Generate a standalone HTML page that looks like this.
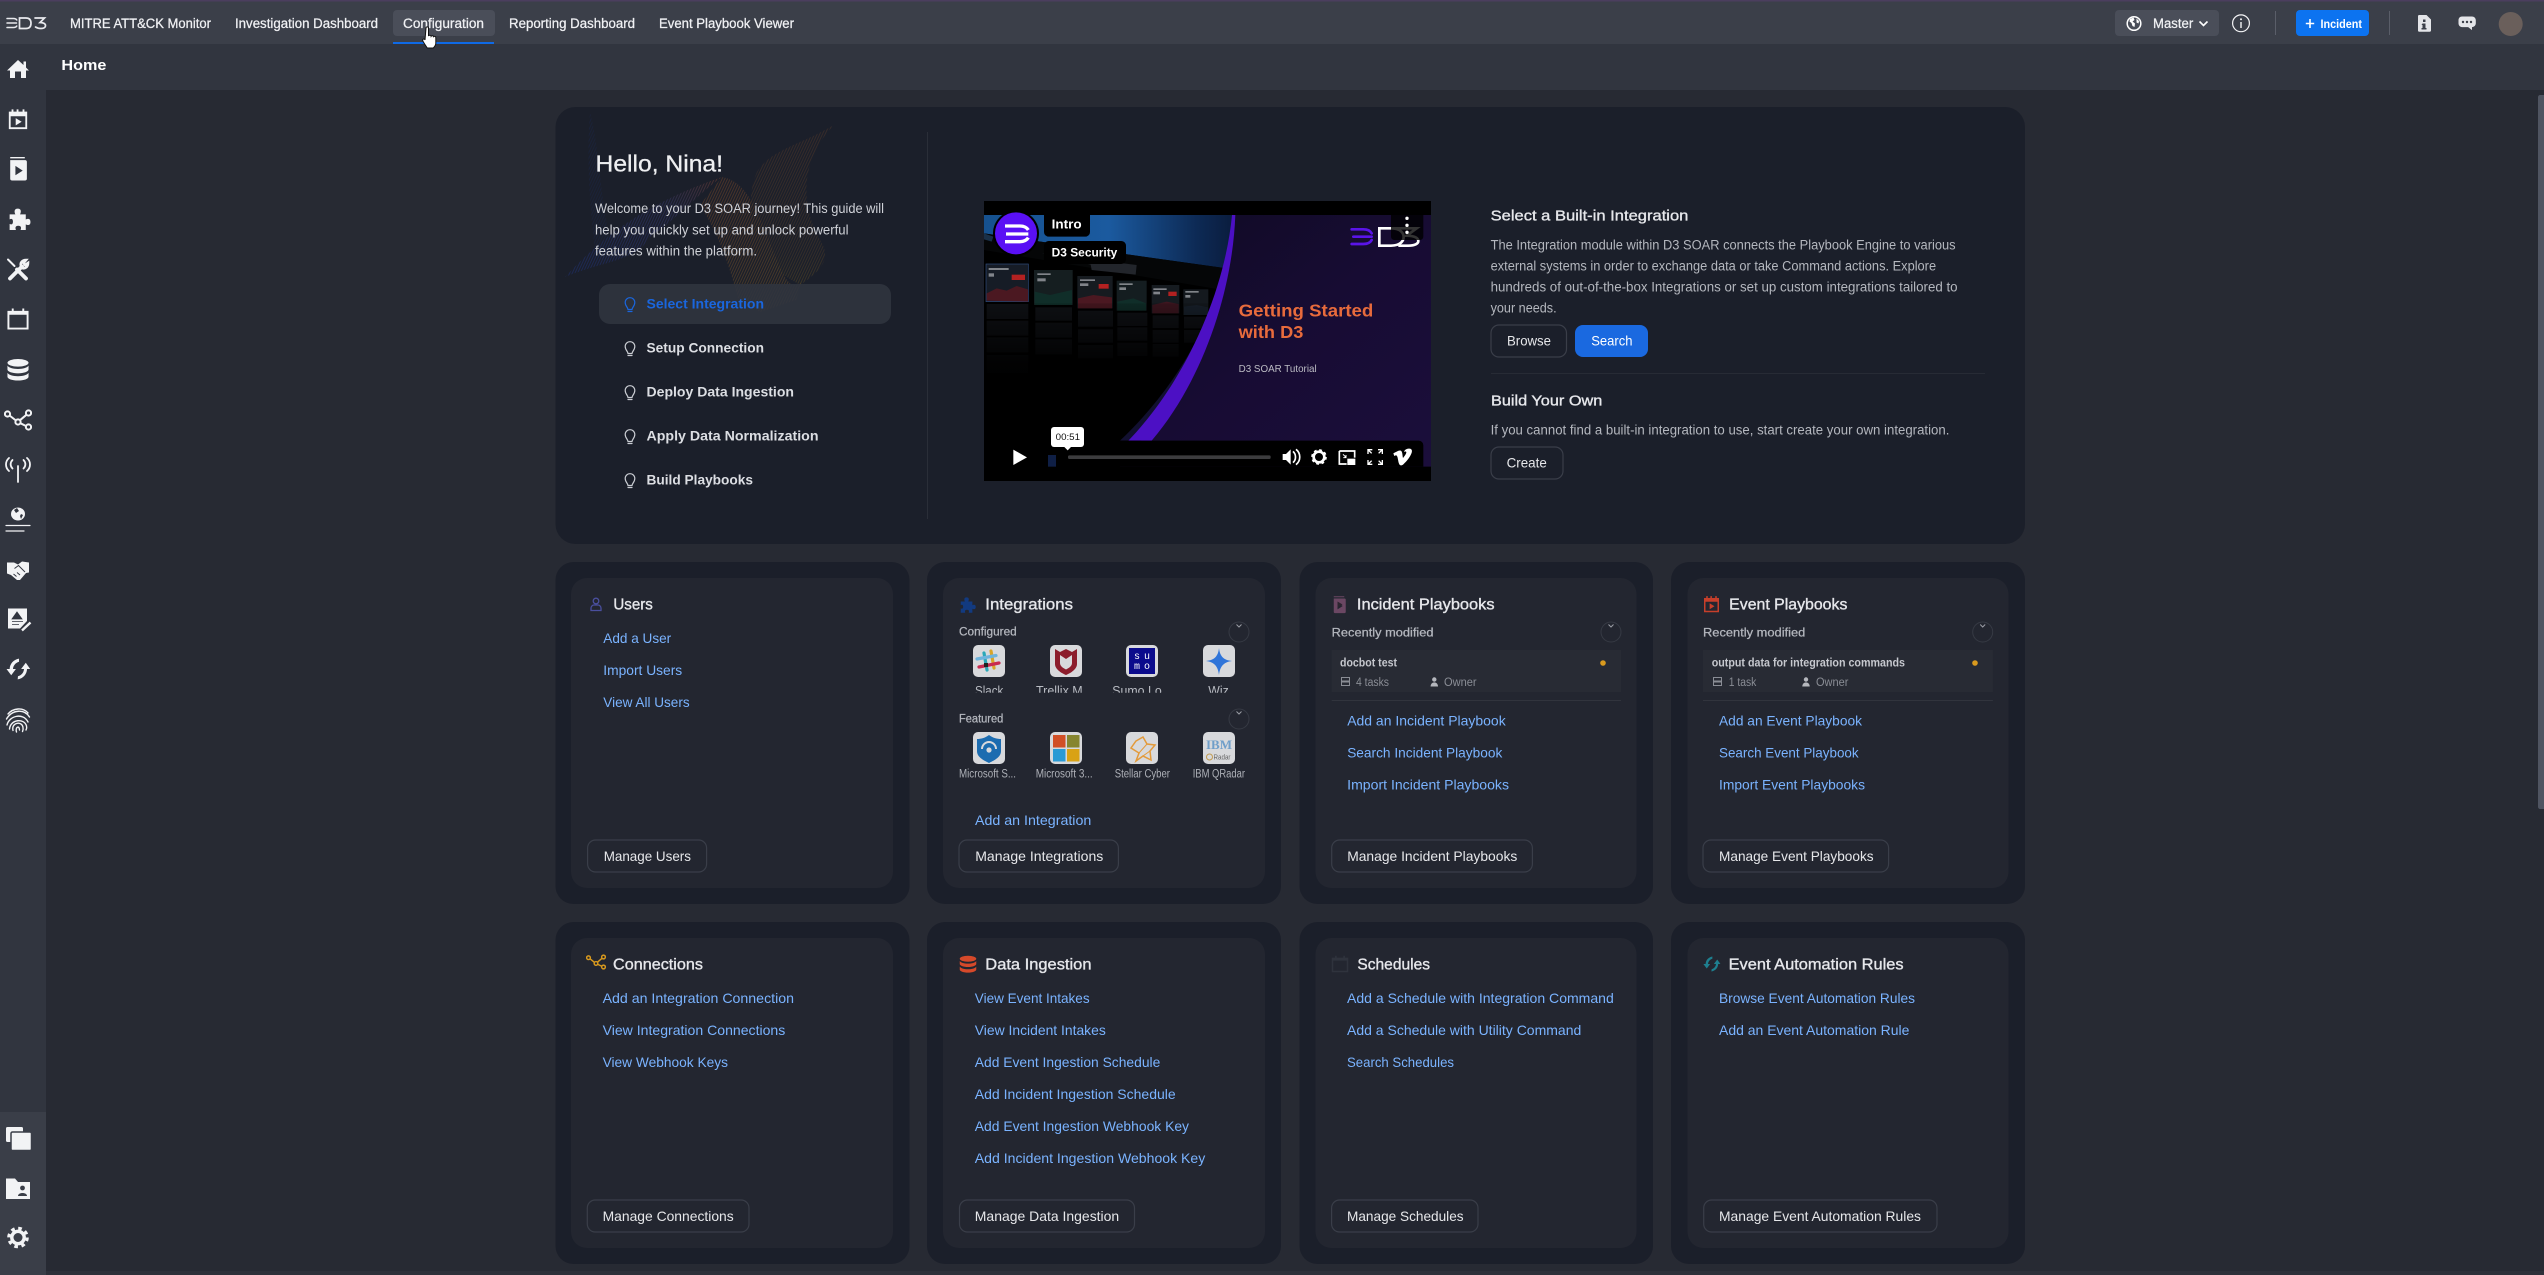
<!DOCTYPE html>
<html lang="en">
<head>
<meta charset="utf-8">
<title>D3 SOAR Home</title>
<style>
html,body{margin:0;padding:0;background:#272a33;width:2544px;height:1275px;overflow:hidden}
svg{display:block}
text{font-family:"Liberation Sans",Arial,sans-serif;white-space:pre}
.n{font-size:13.5px;fill:#f0f1f4;stroke:#f0f1f4;stroke-width:.25}
.h{font-size:15px;font-weight:700;fill:#fff}
.p{font-size:13.5px;fill:#b4b7be}
.w{font-size:13.5px;fill:#cfd1d7}
.s{font-size:13.5px;font-weight:700;fill:#dcdee3}
.t{font-size:15.5px;fill:#e6e7eb;stroke:#e6e7eb;stroke-width:.35}
.l{font-size:14px;fill:#7ab3ff;transform:translateY(-.4px)}
.b{font-size:14px;fill:#e6e7ea}
.g{font-size:11.5px;fill:#b4b7be;stroke:#b4b7be;stroke-width:.25}
.a{font-size:12.5px;fill:#b9bcc3}
.f{font-size:11.5px;fill:#aeb1b8}
.m{font-size:11.5px;fill:#8a8d95}
.r{font-size:11.5px;font-weight:700;fill:#c6c8ce}
.btn{fill:none;stroke:#3a3e49;stroke-width:1.2}
.o{fill:#1b1f2a}
.i{fill:#232630}
.c{fill:none;stroke:#363a44;stroke-width:1}
.v{fill:none;stroke:#9a9da5;stroke-width:1}
</style>
</head>
<body>
<svg xmlns="http://www.w3.org/2000/svg" width="2544" height="1275" viewBox="0 0 2544 1275">
<defs>
<symbol id="puzzle" viewBox="0 0 24 24"><path fill="currentColor" d="M3 8h5.500C7.500 6 7 2.500 10.800 2.500 14.600 2.500 14 6 13 8h5.500v5c1.800-1 4.500-1.200 4.500 2.300 0 3.500-2.700 3.300-4.500 2.300V23h-5c.9-2 .6-4-2.200-4-2.800 0-3.100 2-2.200 4H3v-5.800c1.800 1 3.200.4 3.200-2.200 0-2.600-1.400-3.200-3.200-2.200z"/></symbol>
<symbol id="book" viewBox="0 0 24 24"><path fill="currentColor" fill-rule="evenodd" d="M5 1h14v1.300H5zM5 4h14.500c.8 0 1.500.7 1.500 1.500V22c0 .8-.7 1.500-1.500 1.500H6.500C5.700 23.500 5 22.800 5 22zM10 9.500v9l7-4.500z"/></symbol>
<symbol id="calplay" viewBox="0 0 24 24"><path fill="currentColor" fill-rule="evenodd" d="M2 4h3V1.500h2V4h3.500V1.500h2V4H17V1.500h2V4h3v19H2zM4 9v12h16V9zM9.500 11v8l6.500-4z"/></symbol>
<symbol id="cal" viewBox="0 0 24 24"><path fill="currentColor" fill-rule="evenodd" d="M1 3.500h4.500V1h2v2.500h9V1h2v2.500H23V23H1zM3 7.500V21h18V7.500z"/></symbol>
<symbol id="db" viewBox="0 0 24 24"><ellipse cx="12" cy="5" rx="11" ry="4" fill="currentColor"/><path fill="currentColor" d="M1 8v4c0 2.200 5 4 11 4s11-1.800 11-4V8c-1.500 2.300-6 3.500-11 3.500S2.500 10.300 1 8z"/><path fill="currentColor" d="M1 15.500v4c0 2.200 5 4 11 4s11-1.800 11-4v-4c-1.500 2.300-6 3.500-11 3.500S2.500 17.800 1 15.500z"/></symbol>
<symbol id="net" viewBox="0 0 28 22"><g fill="none" stroke="currentColor" stroke-width="2"><circle cx="3.500" cy="5" r="2.600"/><circle cx="14" cy="13" r="2.600"/><circle cx="24.500" cy="4" r="2.600"/><circle cx="24.500" cy="18" r="2.600"/><path d="M5.700 6.600 11.800 11.400M16 11.200 22.400 5.800M16.300 14.200 22 17"/></g></symbol>
<symbol id="sync" viewBox="0 0 24 24"><path fill="currentColor" d="M12.500 2C7 3 3.700 7 3.500 12H.5l4.500 6 4.500-6H6.700c.2-3 2-5.800 5.800-7zM19 6l-4.500 6h2.800c-.2 3-2 5.800-5.800 7l-.3 3c5.500-1 8.800-5 9-10h3z"/></symbol>
<linearGradient id="gb" x1="0" y1="1" x2="1" y2="0"><stop offset="0" stop-color="#1f3fb0"/><stop offset=".7" stop-color="#4c4a9c"/><stop offset="1" stop-color="#c25a30"/></linearGradient>
<linearGradient id="go" x1="0" y1="0" x2="0" y2="1"><stop offset="0" stop-color="#b0612a"/><stop offset=".8" stop-color="#a0702a"/><stop offset="1" stop-color="#c89a20"/></linearGradient>
<pattern id="lines" width="2.400" height="2.400" patternUnits="userSpaceOnUse" patternTransform="rotate(25)"><rect width="1" height="2.400" fill="#fff"/></pattern>
<mask id="lm"><rect x="540" y="100" width="400" height="300" fill="url(#lines)"/></mask>
<linearGradient id="pb" x1="0" y1="0" x2="1" y2="1"><stop offset="0" stop-color="#0f0a22"/><stop offset=".5" stop-color="#170c33"/><stop offset="1" stop-color="#1b0e3b"/></linearGradient>
<linearGradient id="bl" x1="0" y1="0" x2="1" y2="0"><stop offset="0" stop-color="#16518f"/><stop offset=".5" stop-color="#1b5a9f"/><stop offset=".85" stop-color="#0d2a55"/><stop offset="1" stop-color="#0a1c3d"/></linearGradient>
<linearGradient id="fade" x1="0" y1="0" x2="0" y2="1"><stop offset="0" stop-color="#000" stop-opacity=".15"/><stop offset=".65" stop-color="#000" stop-opacity=".9"/><stop offset="1" stop-color="#000"/></linearGradient>
<clipPath id="lab"><rect x="950" y="680" width="310" height="12.800"/></clipPath>
<clipPath id="vid"><rect x="72" y="33" width="1341" height="840"/></clipPath>
</defs>

<!-- page backgrounds -->
<rect width="2544" height="1275" fill="#272a33"/>
<rect x="0" y="44" width="2544" height="46" fill="#31353f"/>
<rect x="0" y="44" width="46" height="1231" fill="#31353f"/>
<rect x="0" y="1112" width="46" height="163" fill="#3a3e48"/>
<rect x="46" y="1271" width="2498" height="4" fill="#2d3039"/>
<rect x="0" y="0" width="2544" height="44" fill="#3b3f49"/>
<rect x="0" y="0" width="2544" height="1.500" fill="#4b3e5e"/>

<!-- logo -->
<g fill="none" stroke="#e9eaee" stroke-linecap="round">
<path stroke-width="1.500" d="M7 18.500h6.500c2 0 3 1 3.300 1.500M7 23h9.500M7 27.500h6.500c2 0 3-1 3.300-1.500"/>
<path stroke-width="1.700" d="M19.500 18h6.500c3.500 0 5 2 5 5.300S29.500 28.500 26 28.500h-6.500zM35 18h9.500l-4.500 4.500c3.500 0 5.500 1.300 5.500 3 0 2-2 3-4.500 3-2 0-4-.6-5.500-1.500"/>
</g>

<!-- nav -->
<rect x="393" y="10" width="102" height="26" rx="4" fill="#4a4e59"/>
<rect x="393" y="42" width="101" height="2" fill="#0f6ae6"/>
<text class="n" x="70" y="28" textLength="141" lengthAdjust="spacingAndGlyphs">MITRE ATT&amp;CK Monitor</text>
<text class="n" x="235" y="28" textLength="143" lengthAdjust="spacingAndGlyphs">Investigation Dashboard</text>
<text class="n" x="403" y="28" textLength="81" lengthAdjust="spacingAndGlyphs">Configuration</text>
<text class="n" x="509" y="28" textLength="126" lengthAdjust="spacingAndGlyphs">Reporting Dashboard</text>
<text class="n" x="659" y="28" textLength="135" lengthAdjust="spacingAndGlyphs">Event Playbook Viewer</text>
<!-- hand cursor -->
<path transform="translate(0 -4)" fill="#fff" stroke="#111" stroke-width="1" d="M426 32c0-1.500 2.500-1.500 2.500 0v8c.5-1 2.400-1 2.600.3.500-.9 2.300-.8 2.500.4.600-.6 2.200-.4 2.200 1v5.500c0 1.800-1.600 3.800-2.500 4.800h-6c-1-1.500-3.500-5-4.500-7.200-.6-1.400 1-2.400 2-1.300l.2.500z"/>

<!-- top right -->
<rect x="2115" y="10" width="104" height="26" rx="4" fill="#4a4e59"/>
<circle cx="2134" cy="23.500" r="6.800" fill="none" stroke="#fff" stroke-width="1.500"/>
<path fill="#fff" d="M2130 19l3.500-1.500 1 2.500-2 1.500 2.500 2-.5 3.500-2-1-1-3-2-1.500zM2136.500 18.500l2.500 2.500-.5 2.500-2-1z"/>
<text class="n" x="2153" y="28" textLength="40.200" lengthAdjust="spacingAndGlyphs">Master</text>
<path d="M2199.500 21.500 2203.500 25.500 2207.500 21.500" fill="none" stroke="#fff" stroke-width="1.600"/>
<circle cx="2241" cy="23.300" r="8.400" fill="none" stroke="#f4f4f6" stroke-width="1.200"/>
<path d="M2241 22v6" stroke="#f4f4f6" stroke-width="1.400"/><circle cx="2241" cy="19.300" r="1" fill="#f4f4f6"/>
<rect x="2275" y="11" width="1" height="24" fill="#5a5e69"/>
<rect x="2296" y="10" width="73" height="26" rx="4" fill="#0c73f0"/>
<path d="M2310 19v9M2305.800 23.500h8.400" stroke="#fff" stroke-width="1.600"/>
<text x="2320.500" y="28" font-size="12" font-weight="700" fill="#fff" textLength="41.500" lengthAdjust="spacingAndGlyphs">Incident</text>
<rect x="2389" y="11" width="1" height="24" fill="#5a5e69"/>
<path fill="#e4e5e9" d="M2419 15h7.500l4.500 4.500V30.500c0 .7-.6 1.200-1.200 1.200h-10.600c-.7 0-1.200-.6-1.200-1.200V16.200c0-.7.500-1.200 1-1.200z"/>
<path fill="#3b3f49" d="M2423 19.500h2.500v2.500H2423zM2422.500 23.500h3v4.500h1v1.500h-5V28h1v-3h-1z"/>
<path fill="#e4e5e9" d="M2462 16.500h10c2 0 3.800 1.500 3.800 3.800v3c0 2.200-1.700 3.800-3.800 3.800v3l-3.800-3h-6.200c-2 0-3.500-1.600-3.500-3.800v-3c0-2.300 1.500-3.800 3.500-3.800z"/>
<g fill="#3b3f49"><circle cx="2463" cy="22" r="1.200"/><circle cx="2467" cy="22" r="1.200"/><circle cx="2471" cy="22" r="1.200"/></g>
<ellipse cx="2510.700" cy="24" rx="12" ry="12" fill="#6a5f5b"/>

<!-- Home title -->
<text class="h" x="61.400" y="70" textLength="45" lengthAdjust="spacingAndGlyphs">Home</text>

<!-- scrollbar -->
<path d="M2544 95h-4c-1 0-2 1-2 2v710c0 1 1 2 2 2h4z" fill="#4f5461"/>

<!-- sidebar icons -->
<g color="#f2f3f5" fill="#f2f3f5">
<path d="M18 60 23.500 65V61.500H26V67.500L29 70.500H26V78H21V71.500H15V78H10V70.500H7z"/>
<use href="#calplay" x="7" y="108" width="22" height="22"/>
<use href="#book" x="5" y="156" width="25" height="25"/>
<use href="#puzzle" x="6.500" y="205.500" width="25" height="26"/>
<g fill="none" stroke="#f2f3f5" stroke-linecap="round">
<path stroke-width="2" d="M8 259.500 14.500 266"/>
<path stroke-width="3.800" d="M17 269.500 26 278.500"/>
<path stroke-width="3.800" d="M10 278.500 22 266.500"/>
<path stroke-width="2.600" d="M21 266c-1-3 1-6 5-6l-2.500 3 1.500 2 3-2c0 4-3 6-6 5"/>
</g>
<use href="#cal" x="6.500" y="307.500" width="23" height="23"/>
<use href="#db" x="6.500" y="357" width="23" height="25"/>
<use href="#net" x="4" y="409" width="28" height="22"/>
<g fill="none" stroke="#f2f3f5" stroke-width="1.800" stroke-linecap="round">
<path d="M18 466V482"/>
<path d="M12.500 460c-2.500 2.500-2.500 6 0 8.500M9 458c-4 3.500-4 9.500 0 13M23.500 460c2.500 2.500 2.500 6 0 8.500M27 458c4 3.500 4 9.500 0 13"/>
<path d="M6 525.500H30M6 531H24" stroke-width="1.200"/>
</g>
<ellipse cx="18" cy="514" rx="7" ry="6.500"/>
<path d="M14 510l3-2 2 3-3 2zM21 514l2 1-2 4-1-3z" fill="#31353f"/>
<path d="M7 562.500 14 562.500 18 564.500 22 561.500 29 562.500V572.500L26 573 20 580H17L11 575 7 573.500z"/>
<path d="M14.500 568.500 18.500 565.500 25 572M13.500 574l3 2.500M17 572.500l3 2.500" fill="none" stroke="#31353f" stroke-width="1"/>
<path d="M8 608.500H27V621L20 628.500H8z"/>
<path d="M17 612 22 619H12zM12 621.500H23M12 624.500H19" fill="#31353f" stroke="#31353f" stroke-width=".8"/>
<path d="M22 630.500 30.500 622.500" stroke="#f2f3f5" stroke-width="2.400" fill="none"/>
<use href="#sync" x="6" y="655" width="25" height="28"/>
<g fill="none" stroke="#f2f3f5" stroke-width="1.400" stroke-linecap="round">
<path d="M8 714c5-6 15-7 20-1M6.500 719c6-10 18-10 23-2M7 725c2-9 16-13 21-3M9.500 729c1-10 15-11 17-3 .6 2 0 3-.5 4M13 730.500c-2-8 9-10 10-3 .4 2 0 3-.5 4M16.500 732c-1.600-5 3-7 3-2"/>
</g>
<rect x="6" y="1127" width="17" height="15" rx="1.500"/>
<rect x="11" y="1132" width="20.500" height="18.500" rx="1.500" stroke="#3a3e48" stroke-width="1.500"/>
<path d="M6 1178.500H15L18 1182H30V1199H6z"/>
<circle cx="22.500" cy="1188" r="2.400" fill="#3a3e48"/><path d="M18 1196c0-4 9-4 9 0z" fill="#3a3e48"/>
<g fill="none" stroke="#f2f3f5">
<circle cx="18" cy="1237.500" r="9" stroke-width="3.600" stroke-dasharray="3.530 3.530"/>
<circle cx="18" cy="1237.500" r="6.200" stroke-width="3.400"/>
</g>
</g>

<!-- hero -->
<rect class="o" x="555.500" y="107" width="1469.500" height="437" rx="20"/>
<g mask="url(#lm)" opacity=".3">
<path fill="url(#gb)" d="M565 277C600 240 640 205 722 177 700 192 670 225 648 238 640 260 600 262 565 277z"/>
<path fill="#1d3a90" opacity=".45" d="M590 112C600 150 600 200 612 250L596 262C590 210 586 160 590 112z"/>
<path fill="url(#go)" d="M722 177C752 182 762 226 778 262 786 282 792 290 802 282L796 300 760 312 738 298C730 270 722 240 700 205z"/>
<path fill="url(#go)" opacity=".6" d="M834 125C800 145 770 150 757 172 745 200 750 235 772 268L800 285C822 270 832 258 820 240 800 205 800 160 834 125z"/>
</g>
<rect x="927" y="132" width="1" height="387" fill="#2a2e38"/>

<text x="595.500" y="171.500" font-size="23" fill="#eeeff1" stroke="#eeeff1" stroke-width=".3" textLength="127.500" lengthAdjust="spacingAndGlyphs">Hello, Nina!</text>
<text class="w" x="595" y="213" textLength="289" lengthAdjust="spacingAndGlyphs">Welcome to your D3 SOAR journey! This guide will</text>
<text class="w" x="595" y="234.500" textLength="253.500" lengthAdjust="spacingAndGlyphs">help you quickly set up and unlock powerful</text>
<text class="w" x="595" y="255.500" textLength="162" lengthAdjust="spacingAndGlyphs">features within the platform.</text>

<rect x="599" y="284" width="292" height="40" rx="11" fill="#30343e" fill-opacity=".9"/>
<text class="s" style="fill:#1a66dd" x="646.500" y="308.700" textLength="117.500" lengthAdjust="spacingAndGlyphs">Select Integration</text>
<text class="s" x="646.500" y="352.700" textLength="117.500" lengthAdjust="spacingAndGlyphs">Setup Connection</text>
<text class="s" x="646.500" y="396.700" textLength="147.500" lengthAdjust="spacingAndGlyphs">Deploy Data Ingestion</text>
<text class="s" x="646.500" y="440.700" textLength="172" lengthAdjust="spacingAndGlyphs">Apply Data Normalization</text>
<text class="s" x="646.500" y="484.700" textLength="106.500" lengthAdjust="spacingAndGlyphs">Build Playbooks</text>
<g fill="none" stroke-width="1.200" stroke-linecap="round">
<g stroke="#1a66dd"><path d="M628 309.500c0-2-2.800-3.500-2.800-7a4.800 4.800 0 0 1 9.600 0c0 3.500-2.800 5-2.800 7zM628 311.500h4"/></g>
<g stroke="#c9ccd2">
<path d="M628 353.500c0-2-2.800-3.500-2.800-7a4.800 4.800 0 0 1 9.600 0c0 3.500-2.800 5-2.800 7zM628 355.500h4"/>
<path d="M628 397.500c0-2-2.800-3.500-2.800-7a4.800 4.800 0 0 1 9.600 0c0 3.500-2.800 5-2.800 7zM628 399.500h4"/>
<path d="M628 441.500c0-2-2.800-3.500-2.800-7a4.800 4.800 0 0 1 9.600 0c0 3.500-2.800 5-2.800 7zM628 443.500h4"/>
<path d="M628 485.500c0-2-2.800-3.500-2.800-7a4.800 4.800 0 0 1 9.600 0c0 3.500-2.800 5-2.800 7zM628 487.500h4"/>
</g></g>

<!-- video -->
<g transform="translate(960 190) scale(.33333)">
<g clip-path="url(#vid)">
<rect x="72" y="33" width="1341" height="840" fill="#000"/>
<path d="M72 75H822L800 235 480 190 72 130z" fill="url(#bl)"/>
<path d="M72 130 480 190 800 235 790 300 72 180z" fill="#050607"/>
<g opacity=".8">
<g stroke-width="2">
<rect x="78" y="222" width="127" height="113" fill="#1c2430" stroke="#3a5f9f"/>
<rect x="222" y="240" width="116" height="105" fill="#1b2629"/>
<rect x="352" y="258" width="106" height="97" fill="#1c2229"/>
<rect x="470" y="272" width="90" height="90" fill="#1a2528"/>
<rect x="575" y="285" width="83" height="85" fill="#1c2229"/>
<rect x="670" y="298" width="75" height="77" fill="#1a2026"/>
</g>
<path d="M80 332V310L110 295 140 302 170 288 204 298V335z" fill="#5e1e2a"/>
<path d="M224 345V305L270 315 336 300V345z" fill="#143a34"/>
<path d="M354 355V325L400 315 456 322V355z" fill="#5e1e2a"/>
<path d="M472 362V335L520 325 558 340V362z" fill="#143a34"/>
<path d="M577 370V345L620 335 656 342V370z" fill="#4e1c28"/>
<path d="M672 375V350L710 345 744 352V375z" fill="#1f2a38"/>
<g fill="#e02a2a"><rect x="155" y="254" width="40" height="16"/><rect x="416" y="282" width="30" height="14"/><rect x="625" y="305" width="25" height="13"/></g>
<g fill="#cfd3d9" opacity=".75"><rect x="86" y="234" width="60" height="6"/><rect x="86" y="250" width="16" height="10"/><rect x="232" y="250" width="40" height="5"/><rect x="232" y="265" width="25" height="9"/><rect x="360" y="268" width="45" height="5"/><rect x="360" y="280" width="25" height="8"/><rect x="478" y="280" width="40" height="5"/><rect x="478" y="292" width="20" height="8"/><rect x="580" y="295" width="40" height="5"/><rect x="580" y="305" width="20" height="8"/><rect x="676" y="303" width="40" height="5"/><rect x="676" y="315" width="15" height="8"/></g>
<g fill="#15171c"><rect x="80" y="342" width="125" height="45"/><rect x="80" y="392" width="125" height="45"/><rect x="80" y="442" width="125" height="45"/><rect x="80" y="495" width="125" height="55"/><rect x="226" y="352" width="110" height="40"/><rect x="226" y="398" width="110" height="45"/><rect x="226" y="448" width="110" height="45"/><rect x="354" y="362" width="105" height="48"/><rect x="354" y="418" width="105" height="40"/><rect x="354" y="465" width="105" height="40"/><rect x="472" y="368" width="90" height="40"/><rect x="472" y="412" width="90" height="40"/><rect x="472" y="458" width="90" height="40"/><rect x="578" y="376" width="78" height="38"/><rect x="578" y="420" width="78" height="38"/><rect x="578" y="462" width="78" height="38"/><rect x="672" y="380" width="72" height="35"/><rect x="672" y="420" width="72" height="38"/></g>
</g>
<rect x="72" y="340" width="760" height="280" fill="url(#fade)"/>
<rect x="72" y="620" width="760" height="140" fill="#000"/>
<path d="M245 190 530 225 527 254 395 240 392 224z" fill="#22252b"/>
<path d="M72 130 100 140 95 155 72 148z" fill="#1a3048"/>
<!-- purple area and arc drawn over the dashboard -->
<path d="M822 75H1413V830H480C680 600 800 320 822 75z" fill="url(#pb)"/>
<path d="M790 240C740 440 620 620 480 752H505C660 590 770 410 808 230z" fill="#121030"/>
<path d="M816 75H826C818 300 730 570 575 752H505C680 570 795 300 816 75z" fill="#4c10c4"/>
<!-- D3 logo in video -->
<g fill="none" stroke="#5a14e8" stroke-width="8" stroke-linecap="round"><path d="M1175 118h35c14 0 22 6 25 12M1180 140h55M1175 162h35c14 0 22-6 25-12"/></g>
<path d="M1258 115h35c30 0 38 16 38 26s-8 26-38 26h-35zM1300 115h70l-30 22c25 0 35 8 35 16s-10 14-30 14h-30" fill="none" stroke="#fff" stroke-width="8"/>
<path d="M1293 75H1390V140a10 10 0 0 1-10 10H1303a10 10 0 0 1-10-10z" fill="#000" fill-opacity=".8"/>
<g fill="#fff"><circle cx="1341" cy="85" r="5"/><circle cx="1341" cy="106" r="5"/><circle cx="1341" cy="127" r="5"/></g>
<circle cx="168" cy="130" r="69" fill="#000"/><circle cx="168" cy="130" r="63" fill="#5a10f5"/>
<g fill="none" stroke="#fff" stroke-width="10"><path d="M135 108h45c12 0 20 4 25 12M138 132h67M135 155h45c10 0 20-4 25-12" /></g>
<path d="M252 75H390V126a14 14 0 0 1-14 14H266a14 14 0 0 1-14-14z" fill="#000"/>
<rect x="252" y="153" width="246" height="69" rx="14" fill="#000"/>
<text x="275" y="115" font-size="38" font-weight="700" fill="#fff" textLength="90" lengthAdjust="spacingAndGlyphs">Intro</text>
<text x="275" y="199" font-size="36" font-weight="700" fill="#fff" textLength="197" lengthAdjust="spacingAndGlyphs">D3 Security</text>
<text x="836" y="380" font-size="52" font-weight="700" fill="#e76b3c" textLength="404" lengthAdjust="spacingAndGlyphs">Getting Started</text>
<text x="836" y="444" font-size="52" font-weight="700" fill="#e76b3c" textLength="194" lengthAdjust="spacingAndGlyphs">with D3</text>
<text x="836" y="546" font-size="29" fill="#bcbcc4" textLength="234" lengthAdjust="spacingAndGlyphs">D3 SOAR Tutorial</text>
<!-- controls -->
<path d="M72 752H1376a14 14 0 0 1 14 14V830H72z" fill="#000"/>
<rect x="264" y="795" width="24" height="35" fill="#0f1f45"/>
<rect x="324" y="796" width="608" height="11" rx="4" fill="#3c3c3e"/>
<path d="M160 779 201 802 160 825z" fill="#fff"/>
<rect x="273" y="711" width="99" height="60" rx="9" fill="#fff"/><path d="M313 771h20l-10 10z" fill="#fff"/>
<text x="287" y="750" font-size="28" fill="#111" textLength="73" lengthAdjust="spacingAndGlyphs">00:51</text>
<path d="M968 792h10l14-14v46l-14-14h-10z" fill="#fff"/>
<path d="M999 784c10 9 10 25 0 34M1008 778c15 12 15 34 0 46" fill="none" stroke="#fff" stroke-width="5"/>
<circle cx="1077" cy="801" r="16" fill="none" stroke="#fff" stroke-width="8"/>
<circle cx="1077" cy="801" r="20" fill="none" stroke="#fff" stroke-width="7" stroke-dasharray="8 7.700"/>
<path d="M1138 783h46v20M1160 822h-22v-39" fill="none" stroke="#fff" stroke-width="5"/>
<rect x="1162" y="806" width="24" height="19" fill="#fff"/>
<path d="M1149 793l8 8M1150 803h8v-8" fill="none" stroke="#fff" stroke-width="3"/>
<g fill="none" stroke="#fff" stroke-width="4"><path d="M1224 792v-13h13M1254 779h13v13M1224 810v13h13M1254 823h13v-13M1225 780l10 10M1266 780l-10 10M1225 822l10-10M1266 822l-10-10"/></g>
<path d="M1300 790c10-5 17-10 22-8 6 2 5 15 7 22 4-5 10-13 10-17 0-3-4-3-7-1 2-8 10-11 17-10 8 1 8 8 5 15-4 10-13 22-24 32-6 5-11 4-13-2-3-8-3-18-6-23-2-3-4-2-8 0z" fill="#fff"/>
</g>
</g>

<!-- right hero text -->
<text class="t" style="font-size:15px" x="1490.600" y="220.700" textLength="197.800" lengthAdjust="spacingAndGlyphs">Select a Built-in Integration</text>
<text class="p" x="1490.600" y="249.300" textLength="465" lengthAdjust="spacingAndGlyphs">The Integration module within D3 SOAR connects the Playbook Engine to various</text>
<text class="p" x="1490.600" y="270.300" textLength="445.500" lengthAdjust="spacingAndGlyphs">external systems in order to exchange data or take Command actions. Explore</text>
<text class="p" x="1490.600" y="291.300" textLength="467" lengthAdjust="spacingAndGlyphs">hundreds of out-of-the-box Integrations or set up custom integrations tailored to</text>
<text class="p" x="1490.600" y="312.300" textLength="66" lengthAdjust="spacingAndGlyphs">your needs.</text>
<rect class="btn" x="1491" y="325" width="75.500" height="32" rx="8"/>
<text class="b" x="1507" y="345.700" textLength="44" lengthAdjust="spacingAndGlyphs">Browse</text>
<rect x="1575" y="325" width="73" height="32" rx="8" fill="#1a69e0"/>
<text class="b" style="fill:#fff" x="1591.200" y="345.700" textLength="41.300" lengthAdjust="spacingAndGlyphs">Search</text>
<rect x="1491" y="373" width="494" height="1" fill="#272b35"/>
<text class="t" style="font-size:15px" x="1491" y="405.700" textLength="111.300" lengthAdjust="spacingAndGlyphs">Build Your Own</text>
<text class="p" x="1490.600" y="434.300" textLength="458.800" lengthAdjust="spacingAndGlyphs">If you cannot find a built-in integration to use, start create your own integration.</text>
<rect class="btn" x="1491" y="447" width="72" height="32" rx="8"/>
<text class="b" x="1506.600" y="467.700" textLength="40.200" lengthAdjust="spacingAndGlyphs">Create</text>

<!-- outer + inner cards -->
<rect class="o" x="555.500" y="562" width="354" height="342" rx="18"/><rect class="i" x="571" y="578" width="322" height="310" rx="16"/>
<rect class="o" x="927" y="562" width="354" height="342" rx="18"/><rect class="i" x="943" y="578" width="322" height="310" rx="16"/>
<rect class="o" x="1299.500" y="562" width="353.500" height="342" rx="18"/><rect class="i" x="1315.500" y="578" width="321" height="310" rx="16"/>
<rect class="o" x="1671" y="562" width="354" height="342" rx="18"/><rect class="i" x="1687.500" y="578" width="321" height="310" rx="16"/>
<rect class="o" x="555.500" y="922" width="354" height="342" rx="18"/><rect class="i" x="571" y="938" width="322" height="310" rx="16"/>
<rect class="o" x="927" y="922" width="354" height="342" rx="18"/><rect class="i" x="943" y="938" width="322" height="310" rx="16"/>
<rect class="o" x="1299.500" y="922" width="353.500" height="342" rx="18"/><rect class="i" x="1315.500" y="938" width="321" height="310" rx="16"/>
<rect class="o" x="1671" y="922" width="354" height="342" rx="18"/><rect class="i" x="1687.500" y="938" width="321" height="310" rx="16"/>

<!-- Users -->
<g fill="none" stroke="#4a4f9e" stroke-width="1.300"><circle cx="596" cy="601" r="2.800"/><path d="M591 610.500v-2.500c0-1.500 1.500-3 3-3h4c1.500 0 3 1.500 3 3v2.500z"/></g>
<text class="t" x="613.400" y="609.300" textLength="39.400" lengthAdjust="spacingAndGlyphs">Users</text>
<text class="l" x="603.300" y="643.300" textLength="67.900" lengthAdjust="spacingAndGlyphs">Add a User</text>
<text class="l" x="603.300" y="675.300" textLength="78.900" lengthAdjust="spacingAndGlyphs">Import Users</text>
<text class="l" x="603.300" y="707.300" textLength="86.300" lengthAdjust="spacingAndGlyphs">View All Users</text>
<rect class="btn" x="587.600" y="840" width="119" height="32" rx="8"/>
<text class="b" x="603.700" y="861" textLength="87.300" lengthAdjust="spacingAndGlyphs">Manage Users</text>

<!-- Integrations -->
<use href="#puzzle" x="958.500" y="595.500" width="18" height="18" color="#123a80"/>
<text class="t" x="985.300" y="609.300" textLength="87.700" lengthAdjust="spacingAndGlyphs">Integrations</text>
<text class="g" x="959" y="635.700" textLength="57.700" lengthAdjust="spacingAndGlyphs">Configured</text>
<circle class="c" cx="1239" cy="632" r="10"/><path d="M1236.500 624.500l2.500 2.500 2.500-2.500" class="v"/>
<text class="g" x="959" y="722.700" textLength="44.300" lengthAdjust="spacingAndGlyphs">Featured</text>
<circle class="c" cx="1239" cy="719" r="10"/><path d="M1236.500 711.500l2.500 2.500 2.500-2.500" class="v"/>
<g fill="#d8d9dc"><rect x="973" y="645" width="32" height="32" rx="5"/><rect x="1050" y="645" width="32" height="32" rx="5"/><rect x="1126" y="645" width="32" height="32" rx="5"/><rect x="1203" y="645" width="32" height="32" rx="5"/><rect x="973" y="732" width="32" height="32" rx="5"/><rect x="1050" y="732" width="32" height="32" rx="5"/><rect x="1126" y="732" width="32" height="32" rx="5"/><rect x="1203" y="732" width="32" height="32" rx="5"/></g>
<!-- slack -->
<g fill="none" stroke-width="3.200" stroke-linecap="round">
<path d="M984 653 987 670" stroke="#2aa8b8"/><path d="M991 651 994 668" stroke="#d9a528"/>
<path d="M977 659 996 655.500" stroke="#6fb4dc"/><path d="M979 667 999 663" stroke="#c92a50"/>
</g><rect x="984" y="663" width="4" height="4" fill="#222"/>
<!-- trellix -->
<path d="M1055 649 1060 652 1066 649 1072 652 1077 649V664C1077 669 1071 673 1066 675 1061 673 1055 669 1055 664z" fill="#8c1d2c"/><path d="M1060 655 1066 659 1072 655V663C1072 666 1069 668 1066 669.500 1063 668 1060 666 1060 663z" fill="#d8d9dc"/>
<!-- sumo -->
<rect x="1129" y="648" width="26" height="26" fill="#0b0b8c"/>
<text x="1134" y="659" font-size="10" fill="#fff" style="font-family:'Liberation Mono',monospace" textLength="16" lengthAdjust="spacing">s u</text>
<text x="1134" y="669" font-size="10" fill="#fff" style="font-family:'Liberation Mono',monospace" textLength="16" lengthAdjust="spacing">mo</text>
<!-- wiz -->
<path d="M1219 648C1220 657 1224 660 1232 661 1224 662 1220 666 1219 675 1218 666 1214 662 1206 661 1214 660 1218 657 1219 648z" fill="#2f74d9"/>
<!-- sentinel -->
<path d="M989 735C993 738 997 739 1001 739V751C1001 757 995 760 989 763 983 760 977 757 977 751V739C981 739 985 738 989 735z" fill="#1c6cb0"/>
<path d="M982 749a7 7 0 0 1 14 0" fill="none" stroke="#d8d9dc" stroke-width="2"/><circle cx="989" cy="750" r="2.600" fill="#d8d9dc"/>
<!-- 365 -->
<rect x="1053" y="735" width="12.500" height="12.500" fill="#d14f26"/><rect x="1067" y="735" width="12.500" height="12.500" fill="#86852f"/><rect x="1053" y="749" width="12.500" height="12.500" fill="#2a9ad4"/><rect x="1067" y="749" width="12.500" height="12.500" fill="#d9a214"/>
<!-- stellar -->
<path d="M1136 741 1143 737 1147 744 1155 745 1150 751 1151 760 1143 756 1136 761 1139 753 1131 748z" fill="none" stroke="#e39a3a" stroke-width="1.500"/>
<path d="M1139 753 1147 744M1143 756 1150 751" fill="none" stroke="#e39a3a" stroke-width="1"/>
<!-- IBM -->
<text x="1206" y="749" font-size="13" font-weight="700" fill="#6f9ec9" style="font-family:'Liberation Serif',serif" textLength="26" lengthAdjust="spacingAndGlyphs">IBM</text>
<circle cx="1209.500" cy="757" r="3" fill="none" stroke="#c09a50" stroke-width="1"/>
<text x="1213.500" y="759.500" font-size="7" fill="#666" textLength="17" lengthAdjust="spacingAndGlyphs">Radar</text>
<g clip-path="url(#lab)">
<text class="a" x="975" y="695" textLength="28.300" lengthAdjust="spacingAndGlyphs">Slack</text>
<text class="a" x="1036" y="695" textLength="46.700" lengthAdjust="spacingAndGlyphs">Trellix M</text>
<text class="a" x="1112.300" y="695" textLength="49.400" lengthAdjust="spacingAndGlyphs">Sumo Lo</text>
<text class="a" x="1208.300" y="695" textLength="20.400" lengthAdjust="spacingAndGlyphs">Wiz</text>
</g>
<text class="f" x="959" y="777.700" textLength="57" lengthAdjust="spacingAndGlyphs">Microsoft S...</text>
<text class="f" x="1035.700" y="777.700" textLength="57" lengthAdjust="spacingAndGlyphs">Microsoft 3...</text>
<text class="f" x="1114.700" y="777.700" textLength="55.300" lengthAdjust="spacingAndGlyphs">Stellar Cyber</text>
<text class="f" x="1192.700" y="777.700" textLength="52.300" lengthAdjust="spacingAndGlyphs">IBM QRadar</text>
<text class="l" x="975" y="825.300" textLength="116.300" lengthAdjust="spacingAndGlyphs">Add an Integration</text>
<rect class="btn" x="959" y="840" width="159.400" height="32" rx="8"/>
<text class="b" x="975.200" y="861" textLength="128.100" lengthAdjust="spacingAndGlyphs">Manage Integrations</text>

<!-- Incident Playbooks -->
<use href="#book" x="1330" y="595.500" width="18" height="18" color="#6b4763"/>
<path d="M1337.500 601.500 1342.500 604.500 1337.500 607.500z" fill="#2c2530"/>
<text class="t" x="1356.900" y="609.300" textLength="137.700" lengthAdjust="spacingAndGlyphs">Incident Playbooks</text>
<text class="g" x="1331.700" y="636.700" textLength="101.800" lengthAdjust="spacingAndGlyphs">Recently modified</text>
<circle class="c" cx="1611" cy="632" r="10"/><path d="M1608.500 624.500l2.500 2.500 2.500-2.500" class="v"/>
<rect x="1331.700" y="650" width="289.300" height="42" fill="#282b34"/>
<text class="r" x="1340" y="666.700" textLength="57" lengthAdjust="spacingAndGlyphs">docbot test</text>
<circle cx="1603" cy="663" r="2.800" fill="#d99a1e"/>
<g fill="none" stroke="#8a8d95" stroke-width="1"><rect x="1341.500" y="677.500" width="8" height="3.500"/><rect x="1341.500" y="682" width="8" height="3.500"/></g>
<text class="m" x="1356" y="686" textLength="33" lengthAdjust="spacingAndGlyphs">4 tasks</text>
<g fill="#b5b7bd"><circle cx="1434.300" cy="679.500" r="2.200"/><path d="M1430.600 686.500c0-5.500 7.400-5.500 7.400 0z"/></g>
<text class="m" x="1444" y="686" textLength="32.600" lengthAdjust="spacingAndGlyphs">Owner</text>
<rect x="1331.700" y="700" width="289.300" height="1" fill="#31343d"/>
<text class="l" x="1347.200" y="726" textLength="158.500" lengthAdjust="spacingAndGlyphs">Add an Incident Playbook</text>
<text class="l" x="1347.200" y="758" textLength="155.100" lengthAdjust="spacingAndGlyphs">Search Incident Playbook</text>
<text class="l" x="1347.200" y="790" textLength="161.800" lengthAdjust="spacingAndGlyphs">Import Incident Playbooks</text>
<rect class="btn" x="1331.700" y="840" width="200.700" height="32" rx="8"/>
<text class="b" x="1347.200" y="861" textLength="170.100" lengthAdjust="spacingAndGlyphs">Manage Incident Playbooks</text>

<!-- Event Playbooks -->
<use href="#calplay" x="1702.500" y="595" width="18" height="18" color="#c63f2b"/>
<text class="t" x="1729.200" y="609.300" textLength="118.200" lengthAdjust="spacingAndGlyphs">Event Playbooks</text>
<text class="g" x="1703" y="636.700" textLength="102.300" lengthAdjust="spacingAndGlyphs">Recently modified</text>
<circle class="c" cx="1982.700" cy="632" r="10"/><path d="M1980.200 624.500l2.500 2.500 2.500-2.500" class="v"/>
<rect x="1703" y="650" width="289.900" height="42" fill="#282b34"/>
<text class="r" x="1711.700" y="666.700" textLength="193.300" lengthAdjust="spacingAndGlyphs">output data for integration commands</text>
<circle cx="1975" cy="663" r="2.800" fill="#d99a1e"/>
<g fill="none" stroke="#8a8d95" stroke-width="1"><rect x="1713.500" y="677.500" width="8" height="3.500"/><rect x="1713.500" y="682" width="8" height="3.500"/></g>
<text class="m" x="1728.700" y="686" textLength="27.600" lengthAdjust="spacingAndGlyphs">1 task</text>
<g fill="#b5b7bd"><circle cx="1806" cy="679.500" r="2.200"/><path d="M1802.300 686.500c0-5.500 7.400-5.500 7.400 0z"/></g>
<text class="m" x="1816" y="686" textLength="32.400" lengthAdjust="spacingAndGlyphs">Owner</text>
<rect x="1703" y="700" width="289.900" height="1" fill="#31343d"/>
<text class="l" x="1719" y="726" textLength="143" lengthAdjust="spacingAndGlyphs">Add an Event Playbook</text>
<text class="l" x="1719" y="758" textLength="139.600" lengthAdjust="spacingAndGlyphs">Search Event Playbook</text>
<text class="l" x="1719" y="790" textLength="146" lengthAdjust="spacingAndGlyphs">Import Event Playbooks</text>
<rect class="btn" x="1703" y="840" width="185.600" height="32" rx="8"/>
<text class="b" x="1719" y="861" textLength="154.600" lengthAdjust="spacingAndGlyphs">Manage Event Playbooks</text>

<!-- Connections -->
<use href="#net" x="586" y="953" width="20" height="18" color="#d99a1e"/>
<text class="t" x="613" y="969.300" textLength="90" lengthAdjust="spacingAndGlyphs">Connections</text>
<text class="l" x="602.600" y="1003.300" textLength="191.400" lengthAdjust="spacingAndGlyphs">Add an Integration Connection</text>
<text class="l" x="602.600" y="1035.300" textLength="182.700" lengthAdjust="spacingAndGlyphs">View Integration Connections</text>
<text class="l" x="602.600" y="1067.300" textLength="125.400" lengthAdjust="spacingAndGlyphs">View Webhook Keys</text>
<rect class="btn" x="587.300" y="1200" width="161.700" height="32" rx="8"/>
<text class="b" x="602.600" y="1221" textLength="131.100" lengthAdjust="spacingAndGlyphs">Manage Connections</text>

<!-- Data Ingestion -->
<use href="#db" x="959" y="955" width="18" height="18" color="#d6492a"/>
<text class="t" x="985.300" y="969.300" textLength="106.200" lengthAdjust="spacingAndGlyphs">Data Ingestion</text>
<text class="l" x="974.800" y="1003.300" textLength="114.800" lengthAdjust="spacingAndGlyphs">View Event Intakes</text>
<text class="l" x="974.800" y="1035.300" textLength="131" lengthAdjust="spacingAndGlyphs">View Incident Intakes</text>
<text class="l" x="974.800" y="1067.300" textLength="185.500" lengthAdjust="spacingAndGlyphs">Add Event Ingestion Schedule</text>
<text class="l" x="974.800" y="1099.300" textLength="200.900" lengthAdjust="spacingAndGlyphs">Add Incident Ingestion Schedule</text>
<text class="l" x="974.800" y="1131.300" textLength="214.200" lengthAdjust="spacingAndGlyphs">Add Event Ingestion Webhook Key</text>
<text class="l" x="974.800" y="1163.300" textLength="230.500" lengthAdjust="spacingAndGlyphs">Add Incident Ingestion Webhook Key</text>
<rect class="btn" x="959.500" y="1200" width="175" height="32" rx="8"/>
<text class="b" x="974.800" y="1221" textLength="144.400" lengthAdjust="spacingAndGlyphs">Manage Data Ingestion</text>

<!-- Schedules -->
<use href="#cal" x="1331" y="955" width="18" height="18" color="#2f333d"/>
<text class="t" x="1357.400" y="969.300" textLength="72.600" lengthAdjust="spacingAndGlyphs">Schedules</text>
<text class="l" x="1347" y="1003.300" textLength="266.800" lengthAdjust="spacingAndGlyphs">Add a Schedule with Integration Command</text>
<text class="l" x="1347" y="1035.300" textLength="234.300" lengthAdjust="spacingAndGlyphs">Add a Schedule with Utility Command</text>
<text class="l" x="1347" y="1067.300" textLength="107" lengthAdjust="spacingAndGlyphs">Search Schedules</text>
<rect class="btn" x="1331.600" y="1200" width="146.400" height="32" rx="8"/>
<text class="b" x="1347" y="1221" textLength="116.600" lengthAdjust="spacingAndGlyphs">Manage Schedules</text>

<!-- Event Automation Rules -->
<use href="#sync" x="1703" y="955" width="18" height="18" color="#1e7f8f"/>
<text class="t" x="1728.600" y="969.300" textLength="175" lengthAdjust="spacingAndGlyphs">Event Automation Rules</text>
<text class="l" x="1719" y="1003.300" textLength="196" lengthAdjust="spacingAndGlyphs">Browse Event Automation Rules</text>
<text class="l" x="1719" y="1035.300" textLength="190.400" lengthAdjust="spacingAndGlyphs">Add an Event Automation Rule</text>
<rect class="btn" x="1703.700" y="1200" width="233.300" height="32" rx="8"/>
<text class="b" x="1719" y="1221" textLength="202" lengthAdjust="spacingAndGlyphs">Manage Event Automation Rules</text>
</svg>
</body>
</html>
